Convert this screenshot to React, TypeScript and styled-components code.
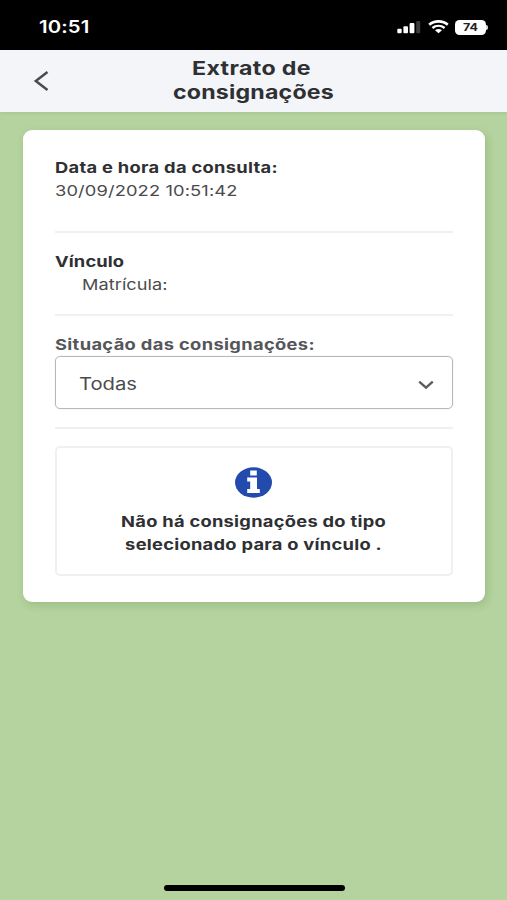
import React from "react";
import styled, { createGlobalStyle } from "styled-components";

const Global = createGlobalStyle`
  *, *::before, *::after { box-sizing: border-box; }
  body { margin: 0; background: #b4d39e; font-family: Inter, "Liberation Sans", sans-serif; }
`;

const Screen = styled.div`
  width: 507px;
  height: 900px;
  overflow: hidden;
  display: flex;
  flex-direction: column;
  background: #b4d39e;
`;

const StatusBar = styled.div`
  height: 49.5px;
  flex: none;
  display: flex;
  align-items: center;
  justify-content: space-between;
  padding: 5px 18px 0 38.5px;
  background: #000;
  color: #fff;
`;

const StatusIcons = styled.div`
  display: flex;
  align-items: center;
  svg { display: block; }
`;

/* Wide lettering: glyphs are widened horizontally from their anchor edge. */
const Wide = styled.span<{
  $size: number;
  $line: number;
  $scale: number;
  $weight?: number;
  $color?: string;
  $track?: number;
  $origin?: "left" | "center";
}>`
  display: block;
  white-space: nowrap;
  font-size: ${(p) => p.$size}px;
  line-height: ${(p) => p.$line}px;
  font-weight: ${(p) => p.$weight ?? 400};
  letter-spacing: ${(p) => p.$track ?? 0}px;
  color: ${(p) => p.$color ?? "#2f3033"};
  transform: scaleX(${(p) => p.$scale});
  transform-origin: ${(p) => p.$origin ?? "left"} center;
`;

const Header = styled.header`
  height: 62px;
  flex: none;
  display: grid;
  grid-template-columns: 84px 1fr 84px;
  align-items: center;
  background: #f4f5f8;
  box-shadow: 0 1px 4px rgba(0, 0, 0, 0.08);
`;

const BackButton = styled.button`
  border: 0;
  padding: 1px 0 0 33px;
  background: none;
  svg { display: block; }
`;

const Title = styled.h1`
  margin: 0;
  padding-top: 1px;
  text-align: center;
`;

const TitleLead = styled.span`
  display: block;
  padding-right: 4px;
`;

const Card = styled.main`
  margin: 18px 22px 0 23px;
  height: 472.5px;
  padding: 26.5px 32px 0;
  border-radius: 9px;
  background: #fff;
  box-shadow: 2px 3px 8px rgba(40, 80, 20, 0.17);
`;

const Section = styled.section<{ $height: number; $top?: number }>`
  height: ${(p) => p.$height}px;
  padding-top: ${(p) => p.$top ?? 0}px;
  border-bottom: 2px solid #eff0f1;
`;

const Indent = styled.div`
  padding-left: 27px;
`;

const Select = styled.div`
  height: 53px;
  padding: 2px 18px 0 22.5px;
  display: flex;
  align-items: center;
  justify-content: space-between;
  border: 1px solid #b8b8bc;
  border-radius: 5px;
  box-shadow: 0 0 1px #c4c4c8;
  svg { display: block; margin-top: 2px; }
`;

const Notice = styled.div`
  height: 130px;
  margin-top: 17px;
  padding: 18.5px 1px 0 0;
  border: 2px solid #eff0f1;
  border-radius: 5px;
  text-align: center;
  svg { display: block; margin: 0 auto 12.5px; }
`;

const HomeIndicator = styled.div`
  width: 181px;
  height: 6px;
  flex: none;
  margin: auto auto 9px 163.5px;
  border-radius: 3px;
  background: #000;
`;

const Signal = () => (
  <svg width="24" height="14" viewBox="0 0 24 14">
    <rect x="0.3" y="8.8" width="4.4" height="4.4" rx="1" fill="#fff" />
    <rect x="6.4" y="6.2" width="4.6" height="7" rx="1" fill="#fff" />
    <rect x="12.6" y="3" width="4.8" height="10.2" rx="1" fill="#fff" />
    <rect x="19.2" y="1" width="4" height="12.2" rx="1" fill="#3c3c3c" />
  </svg>
);

const Wifi = () => (
  <svg width="21" height="14" viewBox="0 0 21 14" fill="none" stroke="#fff">
    <path d="M1.2 4.7C6.2.3 14.8.3 19.8 4.7" strokeWidth="2.6" />
    <path d="M4.4 8C8 5.1 13 5.1 16.6 8" strokeWidth="2.4" />
    <path d="M7 10.3Q10.5 7.9 14 10.3L10.5 13.2Z" fill="#fff" stroke="none" />
  </svg>
);

const Battery = styled.div`
  width: 31px;
  height: 15px;
  margin-left: 6px;
  border-radius: 4.5px;
  background: #fff;
  text-align: center;
`;

const BatteryTip = styled.div`
  width: 2px;
  height: 5px;
  border-radius: 0 2px 2px 0;
  margin-right: 1px;
  background: #ddd;
`;

const Gap = styled.div`
  width: 7.5px;
`;

export default function App() {
  return (
    <>
      <Global />
      <Screen>
        <StatusBar>
          <Wide $size={17.5} $line={22} $scale={1.16} $track={0.1} $weight={600} $color="#fff">10:51</Wide>
          <StatusIcons>
            <Signal />
            <Gap />
            <Wifi />
            <Battery>
              <Wide $size={10} $line={15} $scale={1.25} $weight={700} $color="#222" $origin="center">74</Wide>
            </Battery>
            <BatteryTip />
          </StatusIcons>
        </StatusBar>
        <Header>
          <BackButton aria-label="Voltar">
            <svg width="16" height="20" viewBox="0 0 16 20" fill="none" stroke="#4a4b4e" strokeWidth="2.5">
              <path d="M14.5 1L2.8 10L14.5 19" />
            </svg>
          </BackButton>
          <Title>
            <TitleLead>
              <Wide $size={19} $line={24} $scale={1.22} $track={0.3} $weight={650} $origin="center">Extrato de</Wide>
            </TitleLead>
            <Wide $size={19} $line={24} $scale={1.22} $track={0.15} $weight={650} $origin="center">consignações</Wide>
          </Title>
        </Header>
        <Card>
          <Section $height={77}>
            <Wide $size={15} $line={23} $scale={1.22} $track={0.24} $weight={700}>Data e hora da consulta:</Wide>
            <Wide $size={15} $line={23} $scale={1.22} $track={0.1} $color="#4b4b4d">30/09/2022 10:51:42</Wide>
          </Section>
          <Section $height={83} $top={17}>
            <Wide $size={15} $line={23.5} $scale={1.22} $track={0.1} $weight={700}>Vínculo</Wide>
            <Indent>
              <Wide $size={15} $line={22} $scale={1.21} $track={0.05} $color="#4b4b4d">Matrícula:</Wide>
            </Indent>
          </Section>
          <Section $height={113} $top={17}>
            <Wide $size={15} $line={23} $scale={1.22} $track={0.28} $weight={650} $color="#55565a">Situação das consignações:</Wide>
            <Select>
              <Wide $size={17} $line={24} $scale={1.19} $color="#4b4b4d">Todas</Wide>
              <svg width="16" height="10" viewBox="0 0 16 10" fill="none" stroke="#5c5d60" strokeWidth="2.4">
                <path d="M1.2 1.7L8 7.6L14.8 1.7" />
              </svg>
            </Select>
          </Section>
          <Notice>
            <svg width="37" height="31" viewBox="0 0 37 31">
              <ellipse cx="18.5" cy="15.5" rx="18.5" ry="15.2" fill="#234bad" />
              <path d="M15.2 3.6H21.8V8.6H15.2ZM12.2 10.5H22V22H24.8V26H12.2V22H15.2V14.6H12.2Z" fill="#fff" />
            </svg>
            <Wide $size={15} $line={23} $scale={1.22} $track={0.22} $weight={700} $origin="center">Não há consignações do tipo</Wide>
            <Wide $size={15} $line={23} $scale={1.22} $track={0.22} $weight={700} $origin="center">selecionado para o vínculo .</Wide>
          </Notice>
        </Card>
        <HomeIndicator />
      </Screen>
    </>
  );
}
